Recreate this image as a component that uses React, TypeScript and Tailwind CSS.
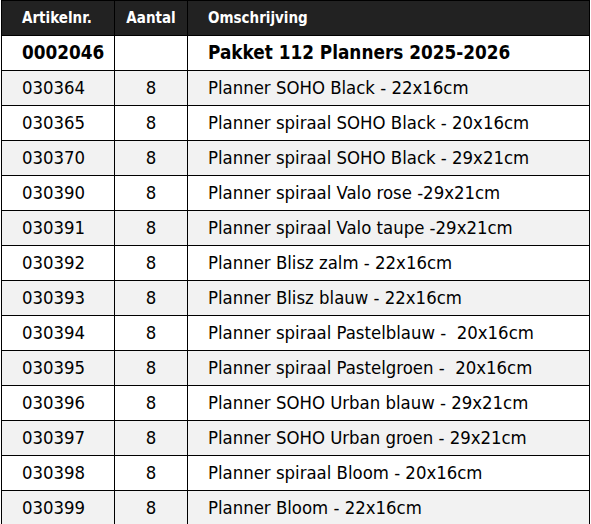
const rows: [string, string][] = [
  ["030364", "Planner SOHO Black - 22x16cm"],
  ["030365", "Planner spiraal SOHO Black - 20x16cm"],
  ["030370", "Planner spiraal SOHO Black - 29x21cm"],
  ["030390", "Planner spiraal Valo rose -29x21cm"],
  ["030391", "Planner spiraal Valo taupe -29x21cm"],
  ["030392", "Planner Blisz zalm - 22x16cm"],
  ["030393", "Planner Blisz blauw - 22x16cm"],
  ["030394", "Planner spiraal Pastelblauw -  20x16cm"],
  ["030395", "Planner spiraal Pastelgroen -  20x16cm"],
  ["030396", "Planner SOHO Urban blauw - 29x21cm"],
  ["030397", "Planner SOHO Urban groen - 29x21cm"],
  ["030398", "Planner spiraal Bloom - 20x16cm"],
  ["030399", "Planner Bloom - 22x16cm"],
];

const cell = "border border-black px-[20px] whitespace-pre";

export default function App() {
  return (
    <div className="bg-white min-h-screen font-['DejaVu_Sans_Condensed','DejaVu_Sans',sans-serif] text-black">
      <table className="ml-px w-[589px] table-fixed border-collapse">
        <colgroup>
          <col className="w-[113px]" />
          <col className="w-[73px]" />
          <col />
        </colgroup>
        <thead>
          <tr className="h-[35px] bg-[#222222] text-left text-[15px] font-bold text-white">
            <th className="border border-black px-[20px]">Artikelnr.</th>
            <th className="border border-black text-center">Aantal</th>
            <th className="border border-black px-[20px]">Omschrijving</th>
          </tr>
        </thead>
        <tbody>
          <tr className="h-[35px] bg-white text-[18.8px] font-bold">
            <td className={cell}>0002046</td>
            <td className="border border-black"></td>
            <td className={cell}>Pakket 112 Planners 2025-2026</td>
          </tr>
          {rows.map(([nr, desc], i) => (
            <tr
              key={nr}
              className={`h-[35px] text-[18.4px] ${i % 2 === 0 ? "bg-[#f2f2f2]" : "bg-white"}`}
            >
              <td className={cell}>{nr}</td>
              <td className="border border-black text-center">8</td>
              <td className={cell}>{desc}</td>
            </tr>
          ))}
        </tbody>
      </table>
    </div>
  );
}
